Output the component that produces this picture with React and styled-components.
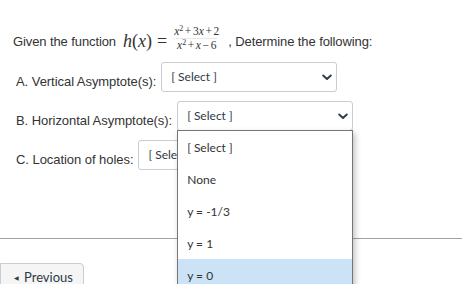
import React from "react";
import styled, { createGlobalStyle } from "styled-components";

const GlobalStyle = createGlobalStyle`
  html, body { margin: 0; padding: 0; background: #fff; overflow: hidden; }
  body {
    font-family: "Liberation Sans", Arial, sans-serif;
    font-size: 13px;
    color: #333;
  }
`;

const Page = styled.div`
  position: relative;
  width: 462px;
  height: 284px;
  overflow: hidden;
  padding-top: 28px;
  box-sizing: border-box;
`;

const Intro = styled.div`
  display: flex;
  align-items: center;
  height: 26px;
  padding-left: 13px;
  white-space: nowrap;
  letter-spacing: -0.1px;
`;

const MathWrap = styled.span`
  display: inline-flex;
  align-items: center;
  margin: 0 8px 0 7px;
  font-family: "Liberation Serif", "Times New Roman", serif;
  font-size: 18px;
  letter-spacing: 0;
  color: #333;
`;

const Var = styled.i`
  font-style: italic;
`;

const Eq = styled.span`
  margin: 0 6px 0 5px;
`;

const Frac = styled.span`
  display: inline-flex;
  flex-direction: column;
  align-items: center;
  font-size: 11.5px;
  line-height: 0.95;
  padding-bottom: 6px;
`;

const Num = styled.span`
  padding: 0 1px 1px;
`;

const Den = styled.span`
  padding: 1px 1px 0;
  border-top: 1px solid #e8e8e8;
`;

const Op = styled.span`
  margin: 0 1.6px;
`;

const Sup = styled.sup`
  font-size: 8px;
  vertical-align: 4px;
  line-height: 0;
`;

const Questions = styled.div`
  display: flex;
  flex-direction: column;
  gap: 9px;
  padding-left: 16px;
  margin-top: 8px;
`;

const Row = styled.div`
  display: flex;
  align-items: center;
  gap: 5px;
`;

const Label = styled.span`
  padding-top: 8px;
  white-space: nowrap;
  letter-spacing: -0.05px;
`;

const SelectBox = styled.div`
  position: relative;
  width: 176px;
  height: 30px;
  box-sizing: border-box;
  border: 1px solid #c7cdd1;
  border-radius: 3px;
  background: #fff;
  display: flex;
  align-items: center;
  justify-content: space-between;
  padding: 0 4px 0 9px;
  font-family: Lato, "Open Sans", sans-serif;
  font-size: 12px;
  color: #2d3b45;
  white-space: nowrap;
`;

const Value = styled.span`
  padding-bottom: 1px;
`;

const List = styled.div`
  position: absolute;
  top: 100%;
  left: -1px;
  width: 176px;
  box-sizing: border-box;
  border: 1px solid #767676;
  background: #fff;
  box-shadow: 2px 3px 6px rgba(0, 0, 0, 0.25);
  z-index: 5;
`;

const Option = styled.div`
  height: 32px;
  display: flex;
  align-items: center;
  padding-left: 9px;
  font-family: Lato, "Open Sans", sans-serif;
  font-size: 12px;
  color: #333;
  background: ${(p) => (p.$active ? "#cce3f7" : "#fff")};
`;

const Divider = styled.hr`
  margin: 68px 0 0;
  border: none;
  height: 1px;
  background: #a3a3a3;
`;

const Footer = styled.div`
  padding-top: 24px;
`;

const PrevButton = styled.button`
  display: inline-flex;
  align-items: center;
  gap: 5px;
  width: 84px;
  height: 29px;
  box-sizing: border-box;
  padding: 0 0 1px 13px;
  margin: 0;
  border: 1px solid #c7cdd1;
  border-radius: 0 4px 0 0;
  background: #f5f5f5;
  font-family: Lato, "Open Sans", sans-serif;
  font-size: 13px;
  color: #2d3b45;
`;

const Tri = styled.span`
  font-size: 6px;
  color: #2d3b45;
`;

const Chevron = () => (
  <svg width="10" height="7" viewBox="0 0 10 7">
    <polyline
      points="1.2,1.5 5,5 8.8,1.5"
      fill="none"
      stroke="#2d3b45"
      strokeWidth="1.9"
      strokeLinecap="round"
      strokeLinejoin="round"
    />
  </svg>
);

const Select = ({ value = "[ Select ]", children }) => (
  <SelectBox>
    <Value>{value}</Value>
    <Chevron />
    {children}
  </SelectBox>
);

const options = ["[ Select ]", "None", "y = -1/3", "y = 1", "y = 0"];

export default function App() {
  return (
    <Page>
      <GlobalStyle />
      <Intro>
        Given the function
        <MathWrap>
          <Var>h</Var>(<Var>x</Var>)
          <Eq>=</Eq>
          <Frac>
            <Num>
              <Var>x</Var>
              <Sup>2</Sup>
              <Op>+</Op>3<Var>x</Var>
              <Op>+</Op>2
            </Num>
            <Den>
              <Var>x</Var>
              <Sup>2</Sup>
              <Op>+</Op>
              <Var>x</Var>
              <Op>−</Op>6
            </Den>
          </Frac>
        </MathWrap>
        , Determine the following:
      </Intro>
      <Questions>
        <Row>
          <Label>A. Vertical Asymptote(s):</Label>
          <Select />
        </Row>
        <Row>
          <Label>B. Horizontal Asymptote(s):</Label>
          <Select>
            <List>
              {options.map((o) => (
                <Option key={o} $active={o === "y = 0"}>
                  {o}
                </Option>
              ))}
            </List>
          </Select>
        </Row>
        <Row>
          <Label>C. Location of holes:</Label>
          <Select />
        </Row>
      </Questions>
      <Divider />
      <Footer>
        <PrevButton>
          <Tri>◀</Tri>
          Previous
        </PrevButton>
      </Footer>
    </Page>
  );
}
